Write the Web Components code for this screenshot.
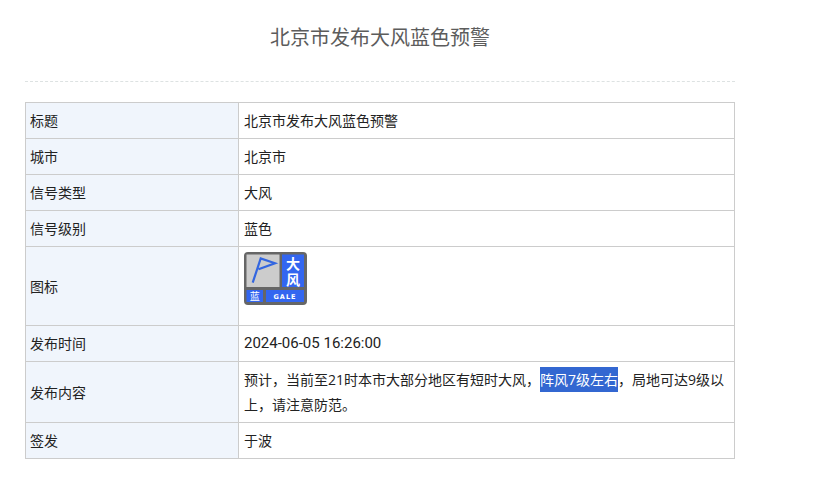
<!DOCTYPE html>
<html lang="zh">
<head>
<meta charset="utf-8">
<title>北京市发布大风蓝色预警</title>
<style>
  body { margin: 0; background: #fff; font-family: "Open Sans", "Noto Sans CJK SC", sans-serif; color: #222; }
</style>
</head>
<body>
<alert-page heading="北京市发布大风蓝色预警">
  <alert-row label="标题">北京市发布大风蓝色预警</alert-row>
  <alert-row label="城市">北京市</alert-row>
  <alert-row label="信号类型">大风</alert-row>
  <alert-row label="信号级别">蓝色</alert-row>
  <alert-row label="图标"><gale-icon></gale-icon></alert-row>
  <alert-row label="发布时间" numeric>2024-06-05 16:26:00</alert-row>
  <alert-row label="发布内容">预计，当前至21时本市大部分地区有短时大风，<text-mark>阵风7级左右</text-mark>，局地可达9级以上，请注意防范。</alert-row>
  <alert-row label="签发">于波</alert-row>
</alert-page>

<script>
class AlertPage extends HTMLElement {
  constructor() {
    super();
    this.attachShadow({ mode: "open" });
  }

  connectedCallback() {
    this.shadowRoot.innerHTML = /* html */`
    <style>
      :host { display: block; width: 710px; margin-left: 25px; }
      h1 {
        margin: 0;
        padding-top: 23px;
        box-sizing: border-box;
        border-bottom: 1px dashed #dde2e2;
        height: 82px;
        font-size: 20px;
        font-weight: 400;
        line-height: 30px;
        text-align: center;
        color: #5c5c5c;
      }
      .table {
        margin-top: 20px;
        border: solid #ccc;
        border-width: 1px 1px 0;
      }
    </style>
    <h1>${this.getAttribute("heading")}</h1>
    <div class="table"><slot></slot></div>`;
  }
}

class AlertRow extends HTMLElement {
  constructor() {
    super();
    this.attachShadow({ mode: "open" });
  }

  connectedCallback() {
    this.shadowRoot.innerHTML = /* html */`
    <style>
      :host {
        display: grid;
        grid-template-columns: 213px 1fr;
        border-bottom: 1px solid #ccc;
        font-size: 14px;
        line-height: 25px;
      }
      .label {
        display: flex;
        align-items: center;
        padding: 5px 4px;
        background: #f0f5fc;
        border-right: 1px solid #ccc;
      }
      .value { padding: 5px; }
      :host([numeric]) .value { font: 15px/25px Roboto, sans-serif; }
    </style>
    <div class="label">${this.getAttribute("label")}</div>
    <div class="value"><slot></slot></div>`;
  }
}

class TextMark extends HTMLElement {
  constructor() {
    super();
    this.attachShadow({ mode: "open" });
  }

  connectedCallback() {
    this.shadowRoot.innerHTML = /* html */`
    <style>
      :host { display: inline-block; background: #3367d1; color: #fff; }
    </style>
    <slot></slot>`;
  }
}

class GaleIcon extends HTMLElement {
  constructor() {
    super();
    this.attachShadow({ mode: "open" });
  }

  connectedCallback() {
    this.shadowRoot.innerHTML = /* html */`
    <style>
      :host { display: block; height: 68px; }
      svg { display: block; }
      text { font-family: "Noto Sans CJK SC", sans-serif; fill: #fff; text-anchor: middle; }
    </style>
    <svg width="63" height="53" viewBox="0 0 63 53">
      <rect width="63" height="53" rx="4" fill="#666"/>
      <rect x="2.500" y="2.500" width="33" height="32.500" fill="#ccc"/>
      <rect x="38" y="2.500" width="22" height="32.500" fill="#3366f0"/>
      <rect x="2.500" y="38" width="16.500" height="12" fill="#3366f0"/>
      <rect x="22" y="38" width="38" height="12" fill="#3366f0"/>
      <path d="M8.700 30.700 L16.700 6.500 L31 11.300 L14.500 17.300" fill="none" stroke="#3366e0" stroke-width="2.200"/>
      <text x="49" y="17" font-size="14" font-weight="700">大</text>
      <text x="49" y="32.500" font-size="14" font-weight="700">风</text>
      <text x="10.700" y="48" font-size="10">蓝</text>
      <text x="41" y="46.800" font-size="6.500" font-weight="700" letter-spacing="1" style="font-family:'DejaVu Sans',sans-serif">GALE</text>
    </svg>`;
  }
}

customElements.define("alert-page", AlertPage);
customElements.define("alert-row", AlertRow);
customElements.define("text-mark", TextMark);
customElements.define("gale-icon", GaleIcon);
</script>
</body>
</html>
